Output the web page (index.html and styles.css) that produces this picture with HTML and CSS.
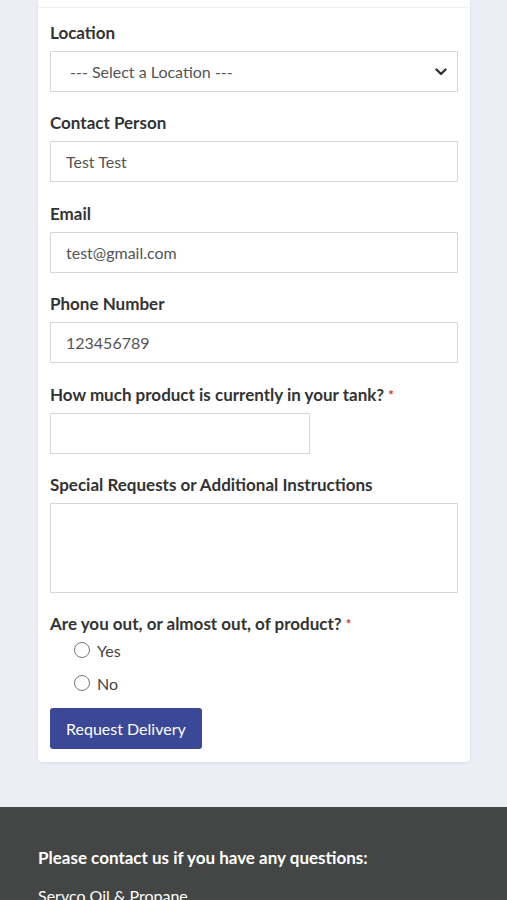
FILE: index.html
```html
<!DOCTYPE html>
<html lang="en">
<head>
<meta charset="utf-8">
<title>Request Delivery</title>
<link rel="stylesheet" href="styles.css">
</head>
<body>
<main class="page">
  <div class="card">
    <div class="card-top"></div>
    <form class="form">
      <div class="group">
        <label class="label">Location</label>
        <div class="select-wrap">
          <select class="control select">
            <option>--- Select a Location ---</option>
          </select>
          <svg class="chevron" width="12" height="8" viewBox="0 0 12 8"><path d="M1.5 1.5 L6 6 L10.5 1.5" fill="none" stroke="#333" stroke-width="2.4" stroke-linecap="round" stroke-linejoin="round"/></svg>
        </div>
      </div>
      <div class="group">
        <label class="label">Contact Person</label>
        <input class="control" type="text" value="Test Test">
      </div>
      <div class="group">
        <label class="label">Email</label>
        <input class="control" type="text" value="test@gmail.com">
      </div>
      <div class="group">
        <label class="label">Phone Number</label>
        <input class="control" type="text" value="123456789">
      </div>
      <div class="group">
        <label class="label">How much product is currently in your tank? <span class="req">*</span></label>
        <input class="control short" type="text">
      </div>
      <div class="group">
        <label class="label">Special Requests or Additional Instructions</label>
        <textarea class="control area"></textarea>
      </div>
      <div class="group radios">
        <label class="label">Are you out, or almost out, of product? <span class="req">*</span></label>
        <label class="radio-row"><input type="radio" name="out" class="radio"><span>Yes</span></label>
        <label class="radio-row"><input type="radio" name="out" class="radio"><span>No</span></label>
      </div>
      <button type="button" class="btn">Request Delivery</button>
    </form>
  </div>
</main>
<footer class="footer">
  <p class="footer-title">Please contact us if you have any questions:</p>
  <p class="footer-text">Servco Oil &amp; Propane</p>
</footer>
</body>
</html>
```
FILE: styles.css
```css
* { box-sizing: border-box; }
html, body { margin: 0; padding: 0; }
body {
  font-family: Lato, "Liberation Sans", sans-serif;
  background: #ebeef5;
  color: #333;
}
.page {
  padding: 0 37px 45px 38px;
}
.card {
  background: #fff;
  border-radius: 0 0 4px 4px;
  box-shadow: 0 1px 3px rgba(0,0,0,0.08);
}
.card-top {
  height: 8px;
  border-bottom: 1px solid #f0f0f0;
}
.form {
  padding: 13px 12px 13px 12px;
}
.group {
  margin-bottom: 19.4px;
}
.label {
  display: block;
  font-weight: 700;
  font-size: 17px;
  line-height: 24px;
  margin-bottom: 6px;
  color: #333;
}
.req { color: #c0392b; font-size: 13px; vertical-align: top; }
.control {
  display: block;
  width: 100%;
  height: 41px;
  border: 1px solid #d6d6d6;
  border-radius: 1px;
  padding: 0 15px;
  font-family: Lato, "Liberation Sans", sans-serif;
  font-size: 16px;
  color: #555;
  background: #fff;
  outline: none;
}
.short { width: 260px; }
.area { height: 90px; resize: none; }
.select-wrap { position: relative; }
.select {
  appearance: none;
  -webkit-appearance: none;
  padding-left: 19px;
}
.chevron {
  position: absolute;
  right: 11px;
  top: 17px;
}
.radios {
  display: flex;
  flex-direction: column;
  margin-bottom: 11px;
}
.radios .label { margin-bottom: 0; }
.radio-row {
  display: flex;
  align-items: center;
  height: 28px;
  padding-left: 24px;
  font-size: 16px;
  color: #444;
}
.radio-row + .radio-row { margin-top: 5px; }
.radio {
  appearance: none;
  -webkit-appearance: none;
  width: 16px;
  height: 16px;
  border: 1px solid #777;
  border-radius: 50%;
  margin: 0 7px 0 0;
  background: #fff;
}
.btn {
  display: block;
  height: 41px;
  padding: 0 16px;
  background: #3a4897;
  color: #fff;
  border: none;
  border-radius: 3px;
  font-family: Lato, "Liberation Sans", sans-serif;
  font-size: 16px;
}
.footer {
  background: #444645;
  color: #fff;
  padding: 40px 38px 20px;
}
.footer-title {
  margin: 0 0 16px;
  font-weight: 700;
  font-size: 17px;
  line-height: 22px;
}
.footer-text {
  margin: 0;
  font-size: 16px;
  line-height: 22px;
}
```
